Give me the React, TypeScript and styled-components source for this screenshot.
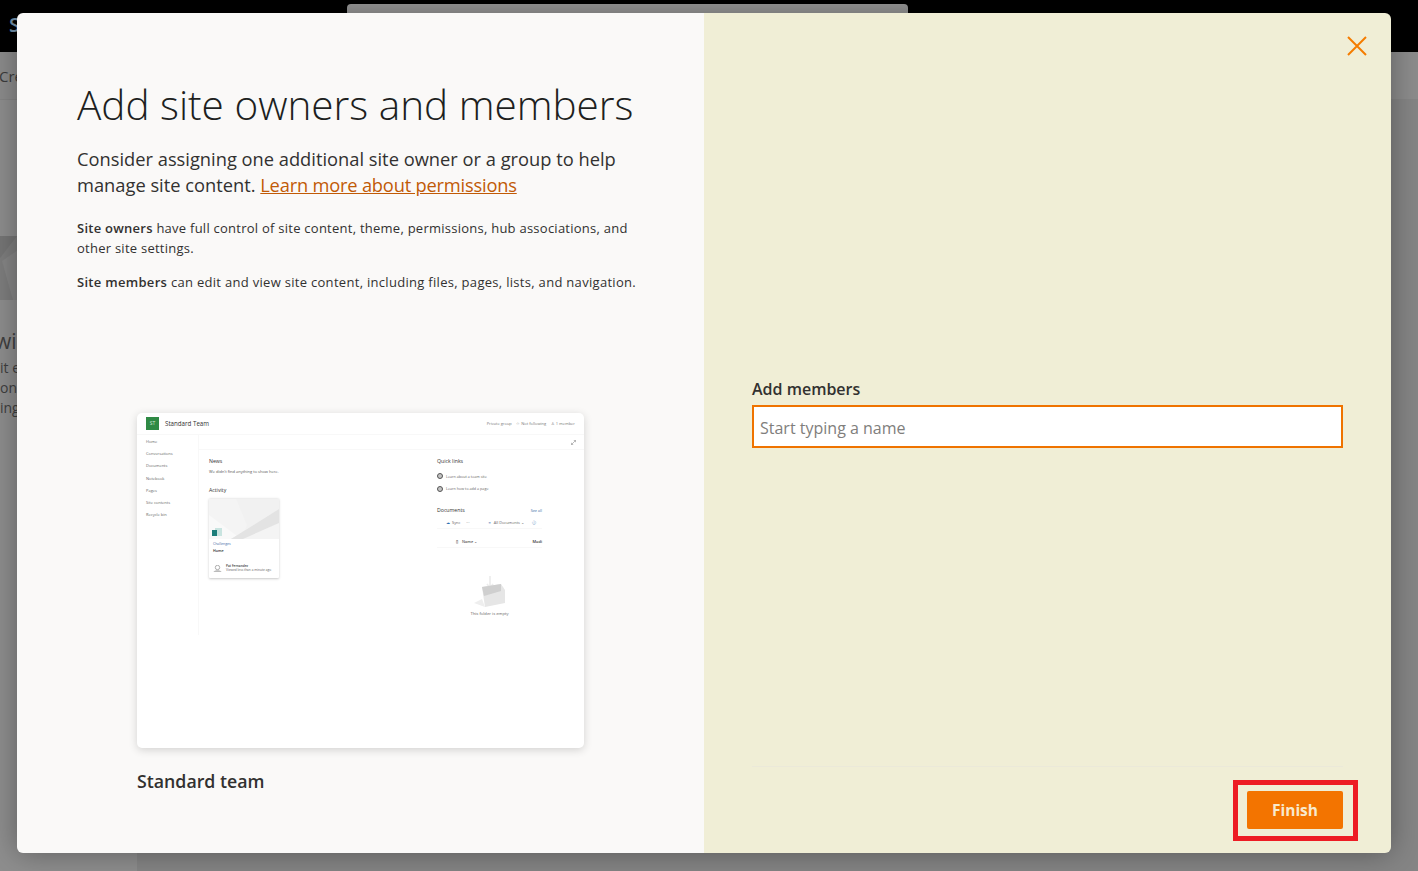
import React from 'react';
import styled, { createGlobalStyle } from 'styled-components';

const GlobalStyle = createGlobalStyle`
  html, body {
    margin: 0;
    padding: 0;
    height: 100%;
    overflow: hidden;
    font-family: 'Open Sans', 'Liberation Sans', sans-serif;
    color: #323130;
  }
  #root {
    height: 100%;
  }
`;

const Page = styled.div`
  position: relative;
  height: 871px;
  overflow: hidden;
  background: #8e8e8e;
`;

/* dimmed site behind the dialog */
const TopBar = styled.div`
  height: 52px;
  background: #000;
  display: flex;
  padding-left: 9px;
  box-sizing: border-box;
`;

const BrandLetter = styled.span`
  width: 338px;
  font-size: 20px;
  font-weight: 600;
  line-height: 50px;
  color: #7391ab;
`;

const SearchStub = styled.div`
  width: 561px;
  height: 30px;
  margin-top: 4px;
  border-radius: 4px;
  background: #999;
`;

const CommandBar = styled.div`
  height: 48px;
  background: #8c8c8c;
  border-bottom: 1px solid #858585;
  box-sizing: border-box;
  font-size: 15px;
  line-height: 48px;
  text-indent: -1px;
  color: #3c3c3c;
`;

const SiteBody = styled.div`
  display: grid;
  grid-template-columns: 137px 1fr;
  height: 771px;
`;

const SitePane = styled.div`
  padding-top: 136px;
  overflow: hidden;
  color: #3f3f3f;
`;

const HeroArt = styled.svg`
  display: block;
  width: 137px;
  height: 64px;
`;

const SiteHeading = styled.div`
  margin: 27px 0 3px -5px;
  font-size: 21px;
  line-height: 28px;
`;

const SiteLine = styled.div`
  font-size: 14px;
  line-height: 20px;
`;

const SiteContent = styled.div`
  background: #858585;
`;

/* dialog */
const Overlay = styled.div`
  position: absolute;
  inset: 0;
  padding: 13px 27px 18px 17px;
  box-sizing: border-box;
`;

const Dialog = styled.div`
  display: grid;
  grid-template-columns: 687px 687px;
  height: 840px;
  border-radius: 6px;
  overflow: hidden;
  box-shadow: 0 0 30px rgba(0, 0, 0, 0.35);
`;

const LeftPanel = styled.section`
  background: #faf9f8;
  padding: 61px 50px 0 60px;
  display: flex;
  flex-direction: column;
`;

const Title = styled.h1`
  margin: 0;
  font-size: 40.5px;
  line-height: 62px;
  font-weight: 300;
  white-space: nowrap;
  color: #201f1e;
`;

const Lead = styled.p`
  margin: 10px 0 0;
  font-size: 18.3px;
  line-height: 26px;
  max-width: 560px;
`;

const LeadLink = styled.a`
  color: #c15a06;
  letter-spacing: -0.2px;
  text-decoration: underline;
`;

const Note = styled.p<{ $spacing: number }>`
  margin: 20px 0 0;
  font-size: 13px;
  line-height: 20px;
  letter-spacing: ${(p) => p.$spacing}px;

  & + & {
    margin-top: 14px;
  }

  b {
    font-weight: 600;
  }
`;

const PreviewBlock = styled.div`
  margin: 0 0 0 60px;
  position: absolute;
  top: 413px;
`;

const Thumb = styled.div`
  width: 447px;
  height: 335px;
  background: #fff;
  border-radius: 5px;
  box-shadow: 0 2px 8px rgba(0, 0, 0, 0.16);
  overflow: hidden;
  color: #323130;
`;

const ThumbHeader = styled.div`
  height: 21px;
  display: flex;
  align-items: center;
  padding: 0 9px;
  border-bottom: 1px solid #f8f8f8;
`;

const ThumbLogo = styled.div`
  width: 13px;
  height: 13px;
  background: #2f8a45;
  color: #cfe6d5;
  font-size: 5px;
  line-height: 13px;
  text-align: center;
`;

const ThumbTitle = styled.span`
  margin-left: 6px;
  font-size: 6.2px;
  flex: 1;
`;

const ThumbMeta = styled.span`
  display: inline-flex;
  align-items: center;
  gap: 1px;
  margin-left: 4.5px;
  font-size: 4px;
  color: #777;
`;

const ThumbBody = styled.div`
  display: grid;
  grid-template-columns: 62px 1fr;
`;

const ThumbNav = styled.nav`
  display: flex;
  flex-direction: column;
  gap: 6.2px;
  padding: 4px 0 0 9px;
  height: 200px;
  border-right: 1px solid #f8f8f8;
  box-sizing: border-box;
`;

const ThumbNavItem = styled.span`
  font-size: 4px;
  line-height: 6px;
  color: #666;
`;

const ThumbCommand = styled.div`
  height: 14px;
  display: flex;
  align-items: center;
  justify-content: flex-end;
  padding-right: 8px;
  border-bottom: 1px solid #f8f8f8;
`;

const ThumbColumns = styled.div`
  display: grid;
  grid-template-columns: 228px 105px;
  padding: 8px 0 0 10px;
`;

const ThumbHeading = styled.div`
  font-size: 5.2px;
  line-height: 7px;
`;

const ThumbText = styled.div`
  margin-top: 4px;
  font-size: 4px;
  line-height: 6px;
  color: #555;
`;

const ActivityHeading = styled(ThumbHeading)`
  margin-top: 12px;
`;

const ActivityCard = styled.div`
  width: 70px;
  height: 79px;
  margin-top: 5px;
  border-radius: 1px;
  background: #fff;
  box-shadow: 0 0.5px 2.5px rgba(0, 0, 0, 0.22);
`;

const CardImage = styled.svg`
  display: block;
`;

const CardBody = styled.div`
  padding: 2px 4px;
`;

const CardSite = styled.div`
  font-size: 3.5px;
  line-height: 6px;
  color: #3f6ea8;
`;

const CardName = styled.div`
  font-size: 3.7px;
  line-height: 8px;
  font-weight: 600;
`;

const CardPerson = styled.div`
  display: flex;
  align-items: center;
  gap: 4px;
  margin-top: 9px;
  font-size: 3.2px;
  line-height: 4px;
  color: #666;

  b {
    display: block;
    font-weight: 600;
    color: #333;
  }
`;

const QuickLinks = styled.div`
  padding-top: 2px;
`;

const QuickLink = styled.div`
  display: flex;
  align-items: center;
  gap: 3px;
  margin-top: 5.5px;
  font-size: 3.7px;
  line-height: 7px;
  color: #666;
`;

const LinkDot = styled.span`
  width: 6px;
  height: 6px;
  border-radius: 50%;
  border: 1px solid #555;
  box-sizing: border-box;
  background: #c4c4c4;
`;

const DocsHead = styled.div`
  display: flex;
  justify-content: space-between;
  align-items: center;
  margin-top: 15px;
`;

const SeeAll = styled.span`
  font-size: 3.8px;
  color: #3f6ea8;
`;

const DocsToolbar = styled.div`
  display: flex;
  align-items: center;
  height: 12px;
  padding-left: 9px;
  margin-top: 2px;
  font-size: 3.9px;
  color: #666;
  border-bottom: 1px solid #f8f8f8;
`;

const ToolbarGap = styled.span<{ $w: number }>`
  width: ${(p) => p.$w}px;
  flex: none;
`;

const ToolbarIcon = styled.span`
  color: #2f6fb0;
`;

const DocsHeaderRow = styled.div`
  display: flex;
  align-items: center;
  height: 19px;
  padding: 7px 0 0 19px;
  box-sizing: border-box;
  gap: 4px;
  font-size: 3.9px;
  font-weight: 600;
  color: #555;
  border-bottom: 1px solid #f8f8f8;

  span:last-child {
    margin-left: auto;
    color: #333;
  }
`;

const EmptyFolder = styled.div`
  display: flex;
  flex-direction: column;
  align-items: center;
  gap: 2px;
  margin-top: 28px;
  font-size: 4.2px;
  line-height: 6px;
  color: #666;

  svg {
    display: block;
  }
`;

const PreviewLabel = styled.div`
  margin-top: 20px;
  font-size: 17.75px;
  line-height: 26px;
  font-weight: 600;
`;

const RightPanel = styled.section`
  position: relative;
  background: #f0eed6;
  padding: 0 48px;
  display: flex;
  flex-direction: column;
`;

const CloseButton = styled.button`
  position: absolute;
  top: 21px;
  right: 22px;
  width: 24px;
  height: 24px;
  padding: 0;
  border: 0;
  background: none;
  color: #f57c00;
  display: flex;
  align-items: center;
  justify-content: center;
`;

const Field = styled.div`
  margin-top: 364px;
  flex: 1;
`;

const FieldLabel = styled.label`
  display: block;
  font-size: 16px;
  line-height: 24px;
  font-weight: 600;
`;

const NameInput = styled.input`
  display: block;
  width: 100%;
  height: 43px;
  margin-top: 4px;
  padding: 2px 6px 0;
  box-sizing: border-box;
  border: 2px solid #ef7300;
  background: #fff;
  font-family: inherit;
  font-size: 16px;
  outline: none;

  &::placeholder {
    color: #807e7c;
    opacity: 1;
  }
`;

const Footer = styled.div`
  position: relative;
  height: 87px;
  border-top: 1px solid #ebe9d9;
  display: flex;
  justify-content: flex-end;
  padding-top: 24px;
  box-sizing: border-box;
`;

const FinishButton = styled.button`
  width: 96px;
  height: 38px;
  border: 0;
  border-radius: 2px;
  background: #f37400;
  color: #f8e9cd;
  font-family: inherit;
  font-size: 15.5px;
  font-weight: 700;
`;

const Highlight = styled.div`
  position: absolute;
  top: 13px;
  right: -15px;
  width: 125px;
  height: 61px;
  border: 5px solid #ed1c24;
  box-sizing: border-box;
`;

const CardArt = () => (
  <CardImage width="70" height="40" viewBox="0 0 70 40">
    <rect width="70" height="40" fill="#f4f4f4" />
    <path d="M0 16 L32 40 H0Z" fill="#f9f9f9" />
    <path d="M27 0 L38 26 L32 40 H22 L70 10 V0Z" fill="#f1f1f1" />
    <path d="M22 40 L70 10 V24 L34 40Z" fill="#e3e3e3" />
    <rect x="6" y="29" width="7" height="8" fill="#c9e4e0" />
    <rect x="3" y="31" width="5" height="6" fill="#1c7d7a" />
  </CardImage>
);

const FolderArt = () => (
  <svg width="33" height="33" viewBox="0 0 33 33">
    <path d="M17 0 V10 M14 8 L17 12 L20 8" fill="none" stroke="#ececec" strokeWidth="1.6" />
    <path d="M9 11 L28 8 L32 14 V27 L12 31Z" fill="#e6e6e6" />
    <path d="M9 11 L28 8 V15 L11 20Z" fill="#cfcfcf" />
    <path d="M1 27 L9 23 L12 31Z" fill="#eeeeee" />
  </svg>
);

const Person = () => (
  <svg width="9" height="7" viewBox="0 0 9 7">
    <circle cx="4.5" cy="2.5" r="2.2" fill="none" stroke="#999" strokeWidth="0.8" />
    <path d="M0.5 7 C1 4.5 8 4.5 8.5 7" fill="#bbb" />
  </svg>
);

const navItems = ['Home', 'Conversations', 'Documents', 'Notebook', 'Pages', 'Site contents', 'Recycle bin'];

const SitePreview = () => (
  <Thumb>
    <ThumbHeader>
      <ThumbLogo>ST</ThumbLogo>
      <ThumbTitle>Standard Team</ThumbTitle>
      <ThumbMeta>Private group</ThumbMeta>
      <ThumbMeta>☆ Not following</ThumbMeta>
      <ThumbMeta>♙ 1 member</ThumbMeta>
    </ThumbHeader>
    <ThumbBody>
      <ThumbNav>
        {navItems.map((item) => (
          <ThumbNavItem key={item}>{item}</ThumbNavItem>
        ))}
      </ThumbNav>
      <div>
        <ThumbCommand>
          <svg width="5" height="5" viewBox="0 0 5 5">
            <path d="M0.5 4.5 L4.5 0.5 M2.8 0.5 H4.5 V2.2 M0.5 2.8 V4.5 H2.2" fill="none" stroke="#777" strokeWidth="0.5" />
          </svg>
        </ThumbCommand>
        <ThumbColumns>
          <div>
            <ThumbHeading>News</ThumbHeading>
            <ThumbText>We didn't find anything to show here.</ThumbText>
            <ActivityHeading>Activity</ActivityHeading>
            <ActivityCard>
              <CardArt />
              <CardBody>
                <CardSite>Challenges</CardSite>
                <CardName>Home</CardName>
                <CardPerson>
                  <Person />
                  <span>
                    <b>Pat Fernandez</b>
                    Viewed less than a minute ago
                  </span>
                </CardPerson>
              </CardBody>
            </ActivityCard>
          </div>
          <div>
            <ThumbHeading>Quick links</ThumbHeading>
            <QuickLinks>
              <QuickLink>
                <LinkDot />
                Learn about a team site
              </QuickLink>
              <QuickLink>
                <LinkDot />
                Learn how to add a page
              </QuickLink>
            </QuickLinks>
            <DocsHead>
              <ThumbHeading>Documents</ThumbHeading>
              <SeeAll>See all</SeeAll>
            </DocsHead>
            <DocsToolbar>
              <ToolbarIcon>☁</ToolbarIcon>
              <ToolbarGap $w={2} />
              <span>Sync</span>
              <ToolbarGap $w={6} />
              <span>···</span>
              <ToolbarGap $w={19} />
              <ToolbarIcon>≡</ToolbarIcon>
              <ToolbarGap $w={3} />
              <span>All Documents ⌄</span>
              <ToolbarGap $w={8} />
              <ToolbarIcon>ⓘ</ToolbarIcon>
            </DocsToolbar>
            <DocsHeaderRow>
              <span>▯</span>
              <span>Name ⌄</span>
              <span>Modi</span>
            </DocsHeaderRow>
            <EmptyFolder>
              <FolderArt />
              This folder is empty
            </EmptyFolder>
          </div>
        </ThumbColumns>
      </div>
    </ThumbBody>
  </Thumb>
);

export default function App() {
  return (
    <>
      <GlobalStyle />
      <Page>
        <TopBar>
          <BrandLetter>S</BrandLetter>
          <SearchStub />
        </TopBar>
        <CommandBar>Cre</CommandBar>
        <SiteBody>
          <SitePane>
            <HeroArt viewBox="0 0 137 64">
              <rect width="137" height="64" fill="#7e7e7e" />
              <path d="M0 22 L17 0 H0Z" fill="#767676" />
              <path d="M2 25 L18 14 V64 H13Z" fill="#868686" />
            </HeroArt>
            <SiteHeading>wi</SiteHeading>
            <SiteLine>it e</SiteLine>
            <SiteLine>on</SiteLine>
            <SiteLine>ing</SiteLine>
          </SitePane>
          <SiteContent />
        </SiteBody>
        <Overlay>
          <Dialog>
            <LeftPanel>
              <Title>Add site owners and members</Title>
              <Lead>
                Consider assigning one additional site owner or a group to help manage site content.{' '}
                <LeadLink href="#">Learn more about permissions</LeadLink>
              </Lead>
              <Note $spacing={0.25}>
                <b>Site owners</b> have full control of site content, theme, permissions, hub associations, and other site settings.
              </Note>
              <Note $spacing={0.3}>
                <b>Site members</b> can edit and view site content, including files, pages, lists, and navigation.
              </Note>
              <PreviewBlock>
                <SitePreview />
                <PreviewLabel>Standard team</PreviewLabel>
              </PreviewBlock>
            </LeftPanel>
            <RightPanel>
              <CloseButton aria-label="Close">
                <svg width="22" height="22" viewBox="0 0 22 22">
                  <path d="M2 2 L20 20 M20 2 L2 20" fill="none" stroke="currentColor" strokeWidth="2" />
                </svg>
              </CloseButton>
              <Field>
                <FieldLabel>Add members</FieldLabel>
                <NameInput placeholder="Start typing a name" />
              </Field>
              <Footer>
                <FinishButton>Finish</FinishButton>
                <Highlight />
              </Footer>
            </RightPanel>
          </Dialog>
        </Overlay>
      </Page>
    </>
  );
}
